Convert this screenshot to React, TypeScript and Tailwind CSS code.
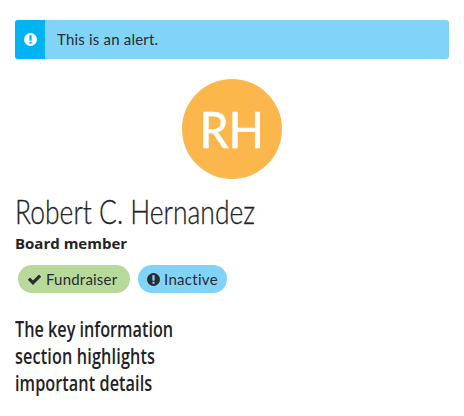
const CHECK =
  'M1671 566q0 40-28 68l-724 724-136 136q-28 28-68 28t-68-28l-136-136-362-362q-28-28-28-68t28-68l136-136q28-28 68-28t68 28l294 295 656-657q28-28 68-28t68 28l136 136q28 28 28 68z';
const EXCLAMATION =
  'M896 128q209 0 385.5 103t279.5 279.5 103 385.5-103 385.5-279.5 279.5-385.5 103-385.5-103-279.5-279.5-103-385.5 103-385.5 279.5-279.5 385.5-103zm128 1247v-190q0-14-9-23.5t-22-9.5h-192q-13 0-23 10t-10 23v190q0 13 10 23t23 10h192q13 0 22-9.5t9-23.5zm-2-344l18-621q0-12-10-18-10-8-24-8h-220q-14 0-24 8-10 6-10 18l17 621q0 10 10 17.5t24 7.5h185q14 0 23.5-7.5t10.5-17.5z';

function Icon({ path }: { path: string }) {
  return (
    <svg viewBox="0 0 1792 1792" className="size-[15px] shrink-0 fill-current" aria-hidden="true">
      <path d={path} />
    </svg>
  );
}

function Alert({ children }: { children: string }) {
  return (
    <div role="alert" className="flex h-[39px] overflow-hidden rounded-[3px] bg-[#81d4f7]">
      <div className="flex w-[30px] items-center justify-center bg-[#00b4f1] text-white">
        <Icon path={EXCLAMATION} />
      </div>
      <div className="flex items-center pl-3 font-['Lato',sans-serif] text-[15px] tracking-[0.2px]">
        {children}
      </div>
    </div>
  );
}

export default function App() {
  return (
    <main className="h-[416px] bg-white px-[15px] pt-5 text-[#282b31]">
      <Alert>This is an alert.</Alert>

      <div className="mx-auto mt-5 flex size-[100px] items-center justify-center rounded-full bg-[#fbb74c] font-['Lato',sans-serif] text-[50px] leading-none text-white">
        <span className="scale-x-[0.93] [-webkit-text-stroke:0.6px_white]">RH</span>
      </div>

      <h1 className="mt-3 mb-px h-10 origin-left scale-x-[0.802] whitespace-nowrap font-['Lato',sans-serif] text-[33px] leading-10 font-light text-[#212327] [-webkit-text-stroke:0.3px_#212327]">
        Robert C. Hernandez
      </h1>
      <div className="h-5 font-['Open_Sans',sans-serif] text-[15px] leading-[22px] font-bold text-[#212327]">
        Board member
      </div>

      <div className="mt-[13px] ml-[3px] flex gap-2 font-['Lato',sans-serif] text-[15px]">
        <span className="flex h-7 w-28 items-center gap-1 rounded-full bg-[#b7da9b] pl-[9px] tracking-[0.2px]">
          <Icon path={CHECK} />
          Fundraiser
        </span>
        <span className="flex h-7 w-[89px] items-center gap-[3px] rounded-full bg-[#81d4f7] pl-2 tracking-[0.3px]">
          <Icon path={EXCLAMATION} />
          Inactive
        </span>
      </div>

      <h2 className="mt-[23px] origin-left scale-x-[0.772] whitespace-nowrap font-['Open_Sans',sans-serif] text-[21px] leading-[27px] font-semibold text-[#212327]">
        <span className="block">The key information</span>
        <span className="block tracking-[0.2px]">section highlights</span>
        <span className="block tracking-[0.1px]">important details</span>
      </h2>
    </main>
  );
}
